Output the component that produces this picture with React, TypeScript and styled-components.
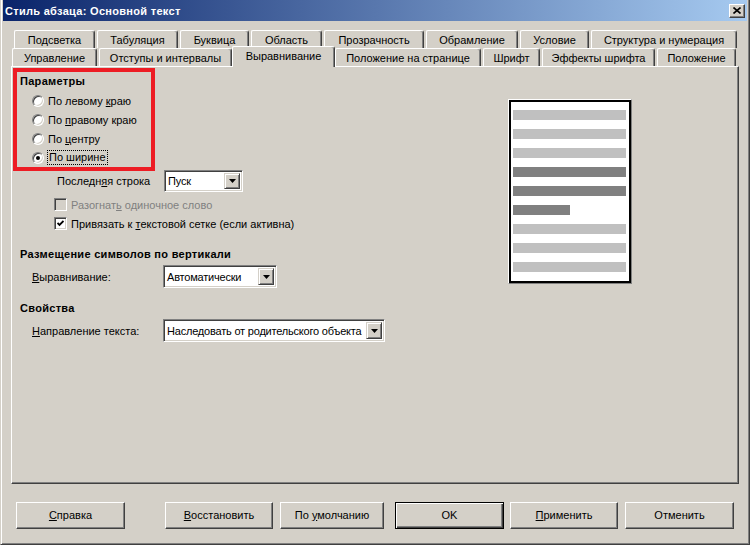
import React from 'react';
import styled, { createGlobalStyle } from 'styled-components';

const FACE = '#d4d0c8';

const GlobalStyle = createGlobalStyle`
  html, body {
    margin: 0;
    padding: 0;
    background: ${FACE};
  }
  body {
    font-family: Tahoma, "Liberation Sans", Arial, sans-serif;
    font-size: 11px;
    color: #000;
  }
  * {
    box-sizing: border-box;
  }
`;

const Window = styled.div`
  width: 750px;
  height: 545px;
  background: ${FACE};
  border-left: 1px solid ${FACE};
  border-right: 1px solid #404040;
  border-bottom: 1px solid #404040;
  box-shadow: inset 1px 0 #fff, inset -1px -1px #808080;
  padding: 0 2px 2px 2px;
  display: flex;
  flex-direction: column;
`;

const TitleBar = styled.div`
  height: 21px;
  display: flex;
  align-items: center;
  justify-content: space-between;
  padding: 0 2px 0 2px;
  background: linear-gradient(to right, #0a246a, #a6caf0);
`;

const Title = styled.span`
  color: #fff;
  font-weight: bold;
  font-size: 11px;
  letter-spacing: 0.3px;
  white-space: nowrap;
`;

const CloseButton = styled.div`
  width: 16px;
  height: 14px;
  background: ${FACE};
  border: 1px solid;
  border-color: #fff #404040 #404040 #fff;
  box-shadow: inset -1px -1px #808080;
  display: flex;
  align-items: center;
  justify-content: center;
`;

const TabArea = styled.div`
  margin-top: 9px;
  display: flex;
  flex-direction: column;
`;

const TabRow = styled.div<{ $indent: number }>`
  display: flex;
  height: 18px;
  padding-left: ${p => p.$indent}px;
`;

const Tab = styled.div<{ $w: number; $active?: boolean }>`
  width: ${p => (p.$active ? p.$w + 2 : p.$w - 2)}px;
  height: ${p => (p.$active ? 21 : 18)}px;
  margin: ${p => (p.$active ? '-2px 0 0 -2px' : '0 2px 0 0')};
  position: relative;
  z-index: ${p => (p.$active ? 2 : 1)};
  background: ${FACE};
  border-top: 1px solid #fff;
  border-left: 1px solid #fff;
  border-right: 1px solid #404040;
  border-radius: 2px 3px 0 0;
  box-shadow: inset -1px 0 #808080;
  display: flex;
  align-items: center;
  justify-content: center;
  padding-bottom: ${p => (p.$active ? 2 : 0)}px;
  white-space: nowrap;
`;

const Panel = styled.div`
  margin-left: 8px;
  width: 728px;
  height: 418px;
  border-top: 1px solid #fff;
  border-left: 1px solid #fff;
  border-right: 1px solid #404040;
  border-bottom: 1px solid #404040;
  box-shadow: inset -1px -1px #808080;
  display: grid;
  grid-template-columns: 496px auto;
  align-items: start;
`;

const LeftCol = styled.div`
  padding: 1px 0 0 1px;
  display: flex;
  flex-direction: column;
`;

const Marked = styled.div`
  width: 142px;
  border: 4px solid #ed1c24;
`;

const Heading = styled.div<{ $mt?: number; $pl?: number }>`
  font-weight: bold;
  letter-spacing: 0.3px;
  line-height: 19px;
  height: 19px;
  margin-top: ${p => p.$mt ?? 0}px;
  padding-left: ${p => p.$pl ?? 7}px;
  white-space: nowrap;
`;

const RadioRow = styled.div`
  display: flex;
  align-items: center;
  height: 19px;
  padding-left: 15px;
  gap: 4px;
  white-space: nowrap;
`;

const Radio = styled.span<{ $on?: boolean }>`
  width: 12px;
  height: 12px;
  border-radius: 50%;
  background: #fff;
  border: 1px solid;
  border-color: #808080 #fff #fff #808080;
  box-shadow: inset 1px 1px #404040, inset -1px -1px ${FACE};
  display: flex;
  align-items: center;
  justify-content: center;
  &::after {
    content: '';
    width: 4px;
    height: 4px;
    border-radius: 50%;
    background: #000;
    display: ${p => (p.$on ? 'block' : 'none')};
  }
`;

const Focused = styled.span`
  outline: 1px dotted #000;
  outline-offset: 0;
  padding: 0 1px;
  line-height: 13px;
`;

const FieldRow = styled.div<{ $pl: number; $mt?: number; $h?: number }>`
  display: flex;
  align-items: center;
  height: ${p => p.$h ?? 22}px;
  margin-top: ${p => p.$mt ?? 0}px;
  padding-left: ${p => p.$pl}px;
  white-space: nowrap;
`;

const FieldLabel = styled.span<{ $w: number }>`
  width: ${p => p.$w}px;
`;

const SelectBox = styled.div<{ $w: number; $h?: number }>`
  width: ${p => p.$w}px;
  height: ${p => p.$h ?? 22}px;
  display: flex;
  align-items: stretch;
  background: #fff;
  border: 1px solid;
  border-color: #808080 #fff #fff #808080;
  box-shadow: inset 1px 1px #404040, inset -1px -1px ${FACE};
  padding: 2px;
`;

const SelectText = styled.span`
  flex: 1;
  min-width: 0;
  padding-left: 1px;
  letter-spacing: -0.2px;
  display: flex;
  align-items: center;
  overflow: hidden;
`;

const ArrowButton = styled.div`
  width: 16px;
  flex-shrink: 0;
  background: ${FACE};
  border: 1px solid;
  border-color: ${FACE} #404040 #404040 ${FACE};
  box-shadow: inset 1px 1px #fff, inset -1px -1px #808080;
  display: flex;
  align-items: center;
  justify-content: center;
`;

const CheckRow = styled.div<{ $mt?: number }>`
  display: flex;
  align-items: center;
  height: 19px;
  margin-top: ${p => p.$mt ?? 0}px;
  padding-left: 41px;
  gap: 4px;
  white-space: nowrap;
`;

const CheckBox = styled.span<{ $disabled?: boolean }>`
  width: 13px;
  height: 13px;
  background: ${p => (p.$disabled ? FACE : '#fff')};
  border: 1px solid;
  border-color: #808080 #fff #fff #808080;
  box-shadow: inset 1px 1px #404040, inset -1px -1px ${FACE};
  display: flex;
  align-items: center;
  justify-content: center;
`;

const CheckText = styled.span<{ $disabled?: boolean }>`
  color: ${p => (p.$disabled ? '#808080' : '#000')};
`;

const U = styled.span`
  text-decoration: underline;
`;

const PreviewFrame = styled.div`
  margin-top: 32px;
  width: 124px;
  height: 185px;
  border: 1px solid;
  border-color: #fff #808080 #808080 #fff;
`;

const PreviewPage = styled.div`
  width: 122px;
  height: 183px;
  border: 2px solid #000;
  background: #fff;
  padding: 8px 3px 0 2px;
  display: flex;
  flex-direction: column;
  gap: 9px;
`;

const Bar = styled.div<{ $dark?: boolean; $short?: boolean }>`
  height: 10px;
  width: ${p => (p.$short ? '57px' : '100%')};
  background: ${p => (p.$dark ? '#808080' : '#c0c0c0')};
`;

const ButtonRow = styled.div`
  margin-top: 18px;
  padding-left: 13px;
  display: flex;
`;

const Button = styled.div<{ $w: number; $ml?: number; $default?: boolean }>`
  width: ${p => p.$w}px;
  height: 27px;
  margin-left: ${p => p.$ml ?? 0}px;
  background: ${FACE};
  border: 1px solid;
  border-color: ${p => (p.$default ? '#000' : '#fff #404040 #404040 #fff')};
  box-shadow: ${p =>
    p.$default
      ? 'inset 1px 1px #fff, inset -1px -1px #404040, inset -2px -2px #808080'
      : 'inset -1px -1px #808080'};
  display: flex;
  align-items: center;
  justify-content: center;
  padding-bottom: 2px;
  white-space: nowrap;
`;

const row1 = [
  { label: 'Подсветка', w: 83 },
  { label: 'Табуляция', w: 83 },
  { label: 'Буквица', w: 71 },
  { label: 'Область', w: 73 },
  { label: 'Прозрачность', w: 102 },
  { label: 'Обрамление', w: 94 },
  { label: 'Условие', w: 71 },
  { label: 'Структура и нумерация', w: 148 },
];

const row2 = [
  { label: 'Управление', w: 87 },
  { label: 'Отступы и интервалы', w: 135 },
  { label: 'Выравнивание', w: 101, active: true },
  { label: 'Положение на странице', w: 148 },
  { label: 'Шрифт', w: 59 },
  { label: 'Эффекты шрифта', w: 115 },
  { label: 'Положение', w: 81 },
];

const bars = [
  { dark: false },
  { dark: false },
  { dark: false },
  { dark: true },
  { dark: true },
  { dark: true, short: true },
  { dark: false },
  { dark: false },
  { dark: false },
];

const Arrow = () => (
  <svg width="7" height="4" viewBox="0 0 7 4">
    <polygon points="0,0 7,0 3.5,4" fill="#000" />
  </svg>
);

const Select = ({ w, h, children }: { w: number; h?: number; children: React.ReactNode }) => (
  <SelectBox $w={w} $h={h}>
    <SelectText>{children}</SelectText>
    <ArrowButton>
      <Arrow />
    </ArrowButton>
  </SelectBox>
);

const App: React.FC = () => {
  return (
    <Window>
      <GlobalStyle />
      <TitleBar>
        <Title>Стиль абзаца: Основной текст</Title>
        <CloseButton>
          <svg width="8" height="7" viewBox="0 0 8 7">
            <path d="M0.5 0.5 L7.5 6.5 M7.5 0.5 L0.5 6.5" stroke="#000" strokeWidth="1.6" />
          </svg>
        </CloseButton>
      </TitleBar>

      <TabArea>
        <TabRow $indent={11}>
          {row1.map(t => (
            <Tab key={t.label} $w={t.w}>
              {t.label}
            </Tab>
          ))}
        </TabRow>
        <TabRow $indent={9}>
          {row2.map(t => (
            <Tab key={t.label} $w={t.w} $active={t.active}>
              {t.label}
            </Tab>
          ))}
        </TabRow>
      </TabArea>

      <Panel>
        <LeftCol>
          <Marked>
            <Heading $pl={3}>Параметры</Heading>
            <RadioRow>
              <Radio />
              <span>
                По левому <U>к</U>раю
              </span>
            </RadioRow>
            <RadioRow>
              <Radio />
              <span>
                По <U>п</U>равому краю
              </span>
            </RadioRow>
            <RadioRow>
              <Radio />
              <span>
                По <U>ц</U>ентру
              </span>
            </RadioRow>
            <RadioRow>
              <Radio $on />
              <Focused>По ширине</Focused>
            </RadioRow>
          </Marked>

          <FieldRow $pl={44} $mt={-1}>
            <FieldLabel $w={107}>
              Последн<U>я</U>я строка
            </FieldLabel>
            <Select w={79}>Пуск</Select>
          </FieldRow>

          <CheckRow $mt={3}>
            <CheckBox $disabled />
            <CheckText $disabled>
              Разогнат<U>ь</U> одиночное слово
            </CheckText>
          </CheckRow>
          <CheckRow>
            <CheckBox>
              <svg width="7" height="7" viewBox="0 0 7 7">
                <polyline points="0.5,3 2.5,5 6.5,1" fill="none" stroke="#000" strokeWidth="1.8" />
              </svg>
            </CheckBox>
            <CheckText>
              Привязать к <U>т</U>екстовой сетке (если активна)
            </CheckText>
          </CheckRow>

          <Heading $mt={12}>Размещение символов по вертикали</Heading>
          <FieldRow $pl={19} $mt={1} $h={23}>
            <FieldLabel $w={131}>
              <U>В</U>ыравнивание:
            </FieldLabel>
            <Select w={114} h={23}>
              Автоматически
            </Select>
          </FieldRow>

          <Heading $mt={11}>Свойства</Heading>
          <FieldRow $pl={19} $mt={1} $h={23}>
            <FieldLabel $w={131}>
              <U>Н</U>аправление текста:
            </FieldLabel>
            <Select w={222} h={23}>
              Наследовать от родительского объекта
            </Select>
          </FieldRow>
        </LeftCol>

        <PreviewFrame>
          <PreviewPage>
            {bars.map((b, i) => (
              <Bar key={i} $dark={b.dark} $short={b.short} />
            ))}
          </PreviewPage>
        </PreviewFrame>
      </Panel>

      <ButtonRow>
        <Button $w={109}>
          <span>
            <U>С</U>правка
          </span>
        </Button>
        <Button $w={108} $ml={40}>
          <span>
            <U>В</U>осстановить
          </span>
        </Button>
        <Button $w={104} $ml={7}>
          <span>
            По <U>у</U>молчанию
          </span>
        </Button>
        <Button $w={109} $ml={11} $default>
          OK
        </Button>
        <Button $w={108} $ml={6}>
          <span>
            <U>П</U>рименить
          </span>
        </Button>
        <Button $w={109} $ml={7}>
          Отменить
        </Button>
      </ButtonRow>
    </Window>
  );
};

export default App;
